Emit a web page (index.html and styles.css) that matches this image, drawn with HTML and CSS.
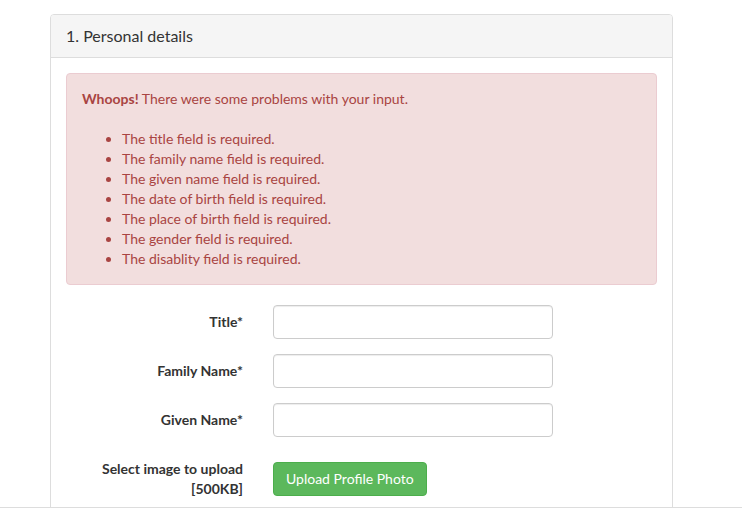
FILE: index.html
```html
<!DOCTYPE html>
<html lang="en">
<head>
  <meta charset="UTF-8" />
  <meta name="viewport" content="width=device-width, initial-scale=1.0" />
  <title>Registration</title>
  <link rel="stylesheet" href="styles.css">
</head>
<body>
  <div class="page">
    <div class="content">
      <div class="panel">
        <div class="panel-heading">1. Personal details</div>
        <div class="panel-body">
          <div class="alert">
            <p><strong>Whoops!</strong> There were some problems with your input.</p>
            <ul>
              <li>The title field is required.</li>
              <li>The family name field is required.</li>
              <li>The given name field is required.</li>
              <li>The date of birth field is required.</li>
              <li>The place of birth field is required.</li>
              <li>The gender field is required.</li>
              <li>The disablity field is required.</li>
            </ul>
          </div>

          <form class="form">
            <div class="form-group">
              <label class="control-label" for="title">Title*</label>
              <div class="control"><input type="text" id="title" class="form-control" /></div>
            </div>
            <div class="form-group">
              <label class="control-label" for="family">Family Name*</label>
              <div class="control"><input type="text" id="family" class="form-control" /></div>
            </div>
            <div class="form-group">
              <label class="control-label" for="given">Given Name*</label>
              <div class="control"><input type="text" id="given" class="form-control" /></div>
            </div>
            <div class="form-group">
              <label class="control-label">Select image to upload [500KB]</label>
              <div class="control">
                <button type="button" class="btn btn-success">Upload Profile Photo</button>
              </div>
            </div>
          </form>
        </div>
      </div>
    </div>
    <div class="footer"></div>
  </div>
</body>
</html>
```

FILE: styles.css
```css
* {
  box-sizing: border-box;
}

body {
  margin: 0;
  font-family: Lato, "Open Sans", sans-serif;
  font-size: 14px;
  line-height: 20px;
  color: #333;
  background: #fff;
}

.page {
  height: 100vh;
  display: flex;
  flex-direction: column;
}

.content {
  flex: 1;
  overflow: hidden;
  padding-top: 14px;
}

.footer {
  border-top: 1px solid #ddd;
}

.panel {
  width: 623px;
  margin-left: 50px;
  border: 1px solid #ddd;
  border-radius: 4px;
  background: #fff;
}

.panel-heading {
  padding: 10px 15px;
  font-size: 16px;
  line-height: 22px;
  background-color: #f5f5f5;
  border-bottom: 1px solid #ddd;
  border-radius: 3px 3px 0 0;
}

.panel-body {
  padding: 15px;
}

.alert {
  padding: 15px;
  margin-bottom: 20px;
  color: #a94442;
  background-color: #f2dede;
  border: 1px solid #ebccd1;
  border-radius: 4px;
}

.alert p {
  margin: 0 0 20px;
}

.alert ul {
  margin: 0;
  padding-left: 40px;
}

.form {
  margin: 0 -15px;
}

.form-group {
  display: flex;
  margin-bottom: 15px;
}

.control-label {
  width: 33.333%;
  padding: 7px 15px 0;
  text-align: right;
  font-weight: bold;
}

.control {
  width: 50%;
  padding: 0 15px;
}

.form-control {
  display: block;
  width: 100%;
  height: 34px;
  padding: 6px 12px;
  font: inherit;
  color: #555;
  border: 1px solid #ccc;
  border-radius: 4px;
  box-shadow: inset 0 1px 1px rgba(0, 0, 0, 0.075);
}

.btn {
  margin-top: 10px;
  padding: 6px 12px;
  font: inherit;
  line-height: 20px;
  border: 1px solid transparent;
  border-radius: 4px;
  cursor: pointer;
}

.btn-success {
  color: #fff;
  background-color: #5cb85c;
  border-color: #4cae4c;
}
```
